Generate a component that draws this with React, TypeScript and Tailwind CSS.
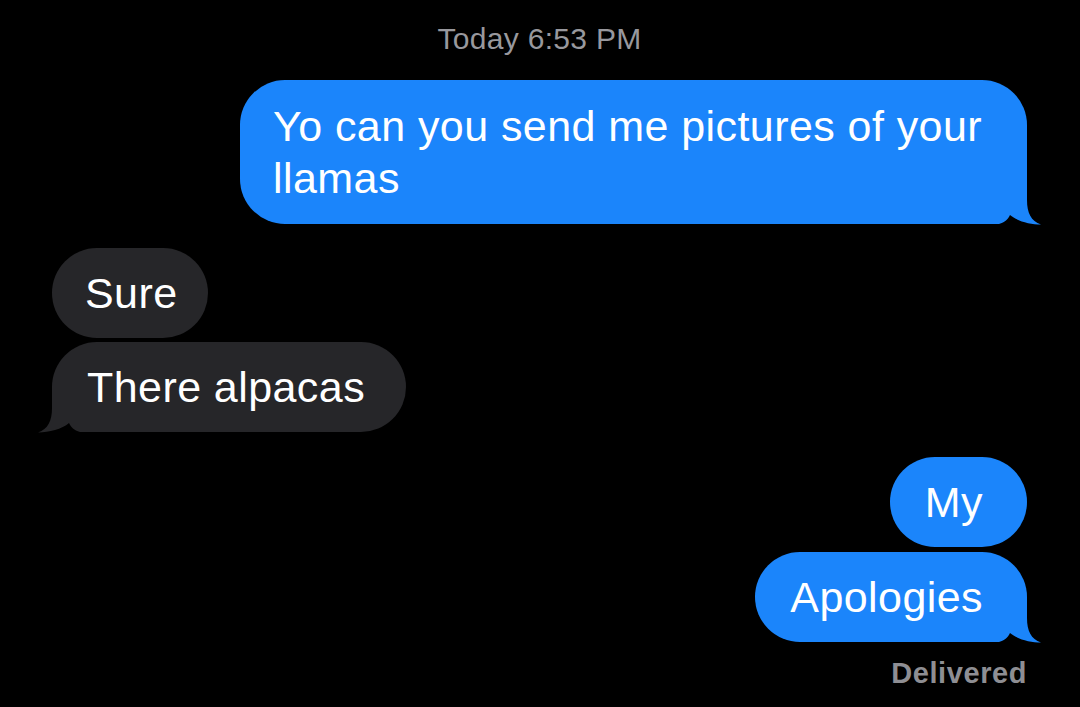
import type { ReactNode } from "react"

type Side = "me" | "them"

const BLUE = "#1b85fb"
const GRAY = "#262629"

// iMessage tail, drawn in the bubble colour over its bottom corner
function Tail({ side, color }: { side: Side; color: string }) {
    const pos = side === "me" ? "right-[-15px]" : "left-[-15px] -scale-x-100"
    return (
        <svg
            className={`absolute bottom-[-2px] ${pos}`}
            width="60"
            height="47"
            viewBox="-45 -45 60 47"
        >
            <path
                d="M -45 -45 L 0 -45 L 0 -24 C 0 -11 4 -3 14 0.5 C 3 0.5 -10 -3 -17 -9 C -19 -5 -22 -1.5 -28 0 L -45 0 Z"
                fill={color}
            />
        </svg>
    )
}

function Bubble({
    side,
    tail = false,
    className = "",
    children,
}: {
    side: Side
    tail?: boolean
    className?: string
    children: ReactNode
}) {
    const isMe = side === "me"
    return (
        <div
            className={`relative rounded-[45px] text-[43px] leading-[52px] tracking-[0.01em] text-white ${
                isMe ? "self-end bg-[#1b85fb]" : "self-start bg-[#262629]"
            } ${className}`}
        >
            <span className="relative z-10">{children}</span>
            {tail && <Tail side={side} color={isMe ? BLUE : GRAY} />}
        </div>
    )
}

export default function App() {
    return (
        <div className="h-[707px] w-[1080px] overflow-hidden bg-black font-['Liberation_Sans','Arial',sans-serif]">
            <div className="flex flex-col pl-[52px] pr-[53px] pt-[21px]">
                <div className="text-center text-[30px] leading-[36px] tracking-[0.01em] text-[#98989d]">
                    Today 6:53 PM
                </div>

                <Bubble side="me" tail className="mt-[23px] max-w-[787px] py-[20px] pl-[33px] pr-[37px]">
                    Yo can you send me pictures of your llamas
                </Bubble>

                <Bubble side="them" className="mt-[24px] py-[19px] pl-[33px] pr-[30px]">
                    Sure
                </Bubble>
                <Bubble side="them" tail className="mt-[4px] py-[19px] pl-[35px] pr-[41px]">
                    There alpacas
                </Bubble>

                <Bubble side="me" className="mt-[25px] py-[19px] pl-[35px] pr-[44px]">
                    My
                </Bubble>
                <Bubble side="me" tail className="mt-[5px] py-[19px] pl-[35px] pr-[44px]">
                    Apologies
                </Bubble>

                <div className="mt-[14px] self-end text-[29px] font-semibold leading-[34px] tracking-[0.02em] text-[#8e8e93]">
                    Delivered
                </div>
            </div>
        </div>
    )
}
